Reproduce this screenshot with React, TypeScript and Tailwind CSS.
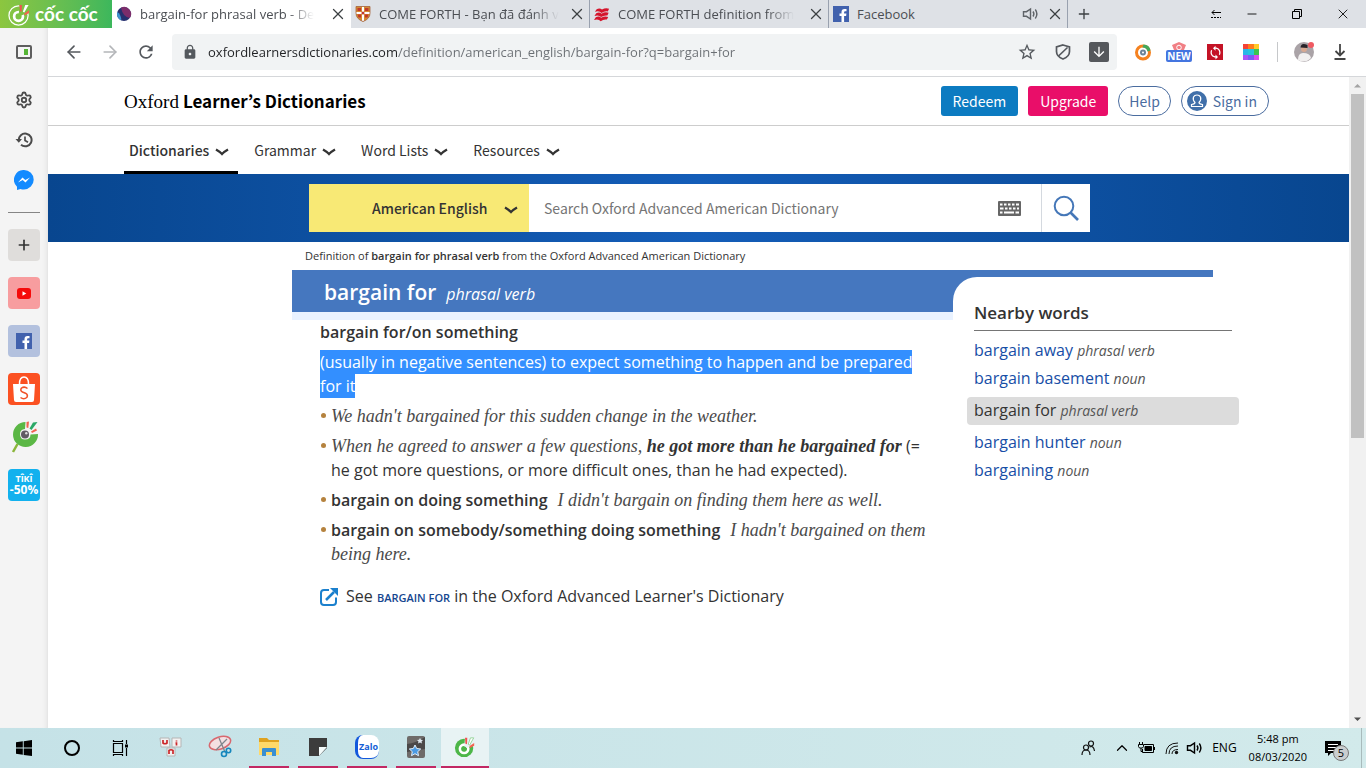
import type { ReactNode } from "react";
import { ArrowLeft, ArrowRight, ChevronUp, Minus, Plus, Settings, X } from "lucide-react";
import { MdArrowDownward, MdLock, MdRefresh, MdStarOutline, MdSync } from "react-icons/md";

const ui = "font-['Open_Sans','Noto_Sans',sans-serif]";
const source = "font-['Noto_Sans_CJK_JP','Open_Sans',sans-serif]";

function CocCocMark({ mono = false, className }: { mono?: boolean; className: string }) {
  return (
    <svg viewBox="0 0 24 24" className={className} aria-hidden="true">
      {mono ? (
        <circle cx="11" cy="13" r="10" fill="none" stroke="#fff" strokeWidth="1.3" />
      ) : (
        <circle cx="11" cy="13" r="10" fill="#4db648" />
      )}
      <circle cx="11" cy="14" r="4.6" fill="none" stroke="#fff" strokeWidth="2.8" />
      <path d="M11 14 12 2 22 1 22 10Z" fill={mono ? "#7cc243" : "#e8f3f4"} />
      <circle cx="11" cy="14" r="2.6" fill={mono ? "#7cc243" : "#4db648"} />
      <path d="M12.500 8.500 12 2 14.500 2 14.200 9Z" fill="#ef5350" />
      <path d="M15.500 9 18 2 21.500 2 17 10Z" fill="#fff" stroke={mono ? "none" : "#7cc97f"} strokeWidth=".8" />
      <path d="M17 11 22 7.500 22 10.500 17.300 13Z" fill="#f4624f" />
    </svg>
  );
}

function Speaker({ className }: { className: string }) {
  return (
    <svg viewBox="0 0 18 16" className={className} fill="none" stroke="currentColor" strokeWidth="1.4" aria-hidden="true">
      <path d="M1.500 5.700h3L8.500 3v10l-4-2.700h-3z" />
      <path d="M11 5.500q1.800 2.500 0 5M13.300 3.500q3.200 4.500 0 9" />
    </svg>
  );
}

function Globe() {
  return (
    <svg viewBox="0 0 16 16" className="size-4" aria-hidden="true">
      <circle cx="8" cy="8" r="7" fill="#27306f" />
      <path d="M5 1.700A7 7 0 0 1 13.800 12Q7 11 5 1.700Z" fill="#7c2d6b" />
      <path d="M1.300 6a7 7 0 0 0 4 8.500Q5 8 1.300 6Z" fill="#3f93cf" />
    </svg>
  );
}

function Shield() {
  return (
    <svg viewBox="0 0 16 16" className="size-4" aria-hidden="true">
      <path d="M1 .500h14v6.500q0 6-7 8.500Q1 13 1 7Z" fill="#d58b32" />
      <path d="M2.500 2h3.500v3H2.500zM10 2h3.500v3H10zM2.500 8.500H6v3H3.500zM10 8.500h3.500l-1 3H10z" fill="#c0392b" />
      <path d="M7 .500h2v5.500h6v2H9v7H7V8H1V6h6Z" fill="#fff" />
      <circle cx="8" cy="7" r="1.600" fill="#c0392b" />
      <path d="M1 .500h14v6.500q0 6-7 8.500Q1 13 1 7Z" fill="none" stroke="#a5623b" strokeWidth=".8" />
    </svg>
  );
}

function Waves() {
  const wave = "M1 4.500 3 1.500Q6.500-.500 9 2 13-.500 17 1L15.500 4Q11.500 3.500 8.500 5.800 6 2.800 1 4.500Z";
  return (
    <svg viewBox="0 0 18 15" className="h-[15px] w-[18px]" fill="#d5152c" aria-hidden="true">
      <path d={wave} />
      <path d={wave} transform="translate(-.5 4.600)" />
      <path d={wave} transform="translate(-1 9.200)" />
    </svg>
  );
}

function FacebookTile() {
  return (
    <svg viewBox="0 0 16 16" className="size-4" aria-hidden="true">
      <path d="M0 0h16v16H0z" fill="#4161ad" />
      <path d="M8.500 16V10H6.500V7.600h2V6q0-3 3-3h2v2.300h-1.400q-1 0-1 1v1.300h2.300L13.100 10h-2v6z" fill="#fff" />
    </svg>
  );
}

function Tab({ icon, title, active = false, sound = false, faded = true }: { icon: ReactNode; title: string; active?: boolean; sound?: boolean; faded?: boolean }) {
  return (
    <div className={`flex min-w-0 max-w-[239px] flex-1 items-center border-r pl-1 ${active ? "border-white bg-white" : "border-gray-400"}`}>
      <button type="button" className="flex min-w-0 flex-1 items-center gap-2 text-left text-[13px] leading-5 text-[#4b4e53]">
        <span className="flex w-4 shrink-0 justify-center">{icon}</span>
        <span className={`min-w-0 whitespace-nowrap ${faded ? "mask-r-from-85% mask-r-to-100%" : ""}`}>{title}</span>
      </button>
      {sound && <Speaker className="mr-[7px] h-4 w-[18px] shrink-0 text-[#5f6368]" />}
      <button type="button" aria-label="Close tab" className="mr-1 flex size-4 shrink-0 items-center justify-center text-[#3c4043]">
        <X className="size-[18px] shrink-0" strokeWidth={1.7} />
      </button>
    </div>
  );
}

function TabStrip() {
  return (
    <div className="flex h-7 shrink-0 bg-[#dee1e6]">
      <div className="flex w-28 shrink-0 items-center gap-1 bg-linear-to-r from-[#8cc63f] to-[#3cb75c] pl-2">
        <CocCocMark mono className="size-[23px]" />
        <span className="font-['Lato','Noto_Sans',sans-serif] text-[19px] leading-6 font-bold text-white">cốc cốc</span>
      </div>
      <Tab active icon={<Globe />} title="bargain-for phrasal verb - De" />
      <Tab icon={<Shield />} title="COME FORTH - Bạn đã đánh v" />
      <Tab icon={<Waves />} title="COME FORTH definition from" />
      <Tab sound faded={false} icon={<FacebookTile />} title="Facebook" />
      <button type="button" aria-label="New tab" className="flex w-8 shrink-0 items-center justify-center text-[#3c4043]">
        <Plus className="size-4" strokeWidth={2} />
      </button>
      <div className="ml-auto flex shrink-0 items-center gap-6 pr-[15px] text-black">
        <button type="button" aria-label="Scroll tabs">
          <svg viewBox="0 0 10 10" className="size-2.5" fill="none" stroke="currentColor" aria-hidden="true">
            <path d="M1 3.500h9M3.500 1l-2.500 2.500 2.500 2.500" />
            <path d="M0 8.500h10" strokeDasharray="2 1" />
          </svg>
        </button>
        <button type="button" aria-label="Minimize"><Minus className="size-3.5" strokeWidth={1.5} /></button>
        <button type="button" aria-label="Restore" className="ml-2">
          <svg viewBox="0 0 12 12" className="size-3" fill="none" stroke="currentColor" aria-hidden="true">
            <path d="M1.500 3.500h7v7h-7zM3.500 3.500v-2h7v7h-2" />
          </svg>
        </button>
        <button type="button" aria-label="Close window" className="ml-2"><X className="size-4" strokeWidth={1.3} /></button>
      </div>
    </div>
  );
}

const squares = ["#f44336", "#ff7a1c", "#ffc928", "#29b6e8", "#26c6da", "#3cc44f", "#a955f7", "#7a5cf5", "#d94ff0"];

function Toolbar() {
  return (
    <div className="flex h-[49px] shrink-0 items-center border-b border-[#d5d7da] bg-white pr-4 pl-4 text-[#55595e]">
      <div className="flex items-center gap-4">
        <button type="button" aria-label="Back"><ArrowLeft className="size-5" strokeWidth={2} /></button>
        <button type="button" aria-label="Forward" className="text-[#b4b6b9]"><ArrowRight className="size-5" strokeWidth={2} /></button>
        <button type="button" aria-label="Reload"><MdRefresh className="size-5" /></button>
      </div>
      <div className="ml-4 flex h-9 min-w-0 flex-1 items-center rounded bg-[#f1f3f4] pr-2 pl-2.5">
        <MdLock className="size-4 shrink-0" />
        <input
          aria-label="Address"
          defaultValue="oxfordlearnersdictionaries.com/definition/american_english/bargain-for?q=bargain+for"
          className="ml-2.5 min-w-0 flex-1 bg-[linear-gradient(to_right,#202124_189px,#6b6f74_189px)] bg-clip-text text-[13px] leading-6 text-transparent outline-none"
        />
        <div className="flex shrink-0 items-center gap-4">
          <button type="button" aria-label="Bookmark"><MdStarOutline className="size-5" /></button>
          <button type="button" aria-label="Ad block">
            <svg viewBox="0 0 16 16" className="size-5 p-0.5" fill="none" stroke="currentColor" strokeWidth="1.700" aria-hidden="true">
              <path d="M8 1 14.500 3v4.500q0 5-6.500 7.500Q1.500 12.500 1.500 7.500V3Z" />
              <path d="M3.500 12 12.500 3.500" />
            </svg>
          </button>
          <button type="button" aria-label="Save media" className="flex size-5 items-center justify-center rounded-xs bg-[#55585c] text-white"><MdArrowDownward className="size-4" /></button>
        </div>
      </div>
      <div className="ml-[17px] flex shrink-0 items-center gap-[11px]">
        <button type="button" aria-label="Music extension">
          <svg viewBox="0 0 18 18" className="size-[18px]" aria-hidden="true">
            <circle cx="9" cy="9.500" r="6.500" fill="none" stroke="#f58220" strokeWidth="3" />
            <path d="M9.500 1.500q6 0 7 6l-3 1q-1-4-5-4Z" fill="#43a85b" />
            <circle cx="9" cy="9.500" r="3" fill="#6b8499" />
            <circle cx="9" cy="9.500" r="1" fill="#fff" />
          </svg>
        </button>
        <button type="button" aria-label="New deals" className="ml-[3px] flex h-[22px] w-[26px] flex-col items-center pt-px">
          <svg viewBox="0 0 16 8" className="h-2 w-4 shrink-0" aria-hidden="true">
            <path d="M1 3 8 0l7 3-2 5H3Z" fill="#f17f84" />
            <circle cx="8" cy="5.500" r="2.300" fill="none" stroke="#fff" />
          </svg>
          <span className="flex h-3 w-[26px] shrink-0 items-center justify-center rounded-xs bg-[#4475e0] text-[10px] leading-3 font-bold text-white">NEW</span>
        </button>
        <button type="button" aria-label="Sync" className="ml-1 flex size-4 items-center justify-center bg-[#c41326] text-white"><MdSync className="size-[15px]" /></button>
        <button type="button" aria-label="Colours" className="ml-[9px]">
          <svg viewBox="0 0 3 3" className="size-4" shapeRendering="crispEdges" aria-hidden="true">
            {squares.map((c, i) => <rect key={c} x={i % 3} y={Math.floor(i / 3)} width="1" height="1" fill={c} />)}
          </svg>
        </button>
        <span className="ml-[7px] h-5 w-px bg-[#c6c8ca]" />
        <button type="button" aria-label="Profile" className="ml-[5px]">
          <svg viewBox="0 0 20 20" className="size-5" aria-hidden="true">
            <circle cx="10" cy="10" r="10" fill="#aaa3a7" />
            <path d="M4 18q0-7 5-7 7 0 8 5-6 6-13 2Z" fill="#f1efef" />
            <circle cx="10" cy="7" r="3" fill="#d7a891" />
            <path d="M6.500 5.500Q7 0 13.500 3v3Z" fill="#272329" />
            <circle cx="17" cy="3" r="3" fill="#f05a62" />
          </svg>
        </button>
        <button type="button" aria-label="Downloads" className="ml-[5px] text-[#444]">
          <svg viewBox="0 0 20 20" className="size-5" fill="none" stroke="currentColor" strokeWidth="1.800" aria-hidden="true">
            <path d="M10 2v11M5.500 9 10 13.500 14.500 9M4.500 17h11" />
          </svg>
        </button>
      </div>
    </div>
  );
}

function BrowserSidebar() {
  return (
    <aside className="flex w-12 shrink-0 flex-col items-center bg-[#f4f4f4] pt-4 text-[#4b4b4b] shadow-[inset_-5px_0_5px_-4px_#dddddd]">
      <button type="button" aria-label="Toggle sidebar" className="flex h-4 items-center">
        <svg viewBox="0 0 16 14" className="h-3.5 w-4" aria-hidden="true">
          <rect x="1" y="1" width="14" height="12" rx="1" fill="none" stroke="#5e5e5e" strokeWidth="2" />
          <path d="M8 4h4v6H8z" fill="#55b435" />
        </svg>
      </button>
      <button type="button" aria-label="Settings" className="mt-[31px]"><Settings className="size-[18px]" strokeWidth={2.4} /></button>
      <button type="button" aria-label="History" className="mt-[22px]">
        <svg viewBox="0 0 18 18" className="size-[18px]" fill="none" stroke="currentColor" strokeWidth="2" aria-hidden="true">
          <path d="M3.800 9.500A6.400 6.400 0 1 1 6 13.800" />
          <path d="M10 5.500V9.500l3 1.800" strokeWidth="1.700" />
          <path d="M.500 8h6.500L3.800 11.800Z" fill="currentColor" stroke="none" />
        </svg>
      </button>
      <button type="button" aria-label="Messenger" className="mt-[21px]">
        <svg viewBox="0 0 20 20" className="size-5" aria-hidden="true">
          <path d="M10 0a9.700 9.700 0 0 1 0 19.400q-2 0-3.500-.500L3 20v-3.300A9.700 9.700 0 0 1 10 0Z" fill="#148bff" />
          <path d="m4 12.500 4.500-5 2.800 2.400L16 7.500l-4.500 5-2.800-2.400Z" fill="#fff" />
        </svg>
      </button>
      <span className="mt-[22px] h-px w-8 bg-[#858585]" />
      <div className="mt-4 flex flex-col gap-4">
        <button type="button" aria-label="Add shortcut" className="flex size-8 items-center justify-center rounded bg-[#dfdddb] text-[#333]"><Plus className="size-4" strokeWidth={2.5} /></button>
        <button type="button" aria-label="YouTube" className="flex size-8 items-center justify-center rounded bg-[#f79d9f]">
          <svg viewBox="0 0 14 11" className="h-[11px] w-3.5" aria-hidden="true"><rect width="14" height="11" rx="3" fill="#f50a0a" /><path d="M5.500 3.300v4.400L9.300 5.500Z" fill="#fff" /></svg>
        </button>
        <button type="button" aria-label="Facebook" className="flex size-8 items-center justify-center rounded bg-[#b3c1de]"><FacebookTile /></button>
        <button type="button" aria-label="Shopee" className="flex size-8 items-center justify-center rounded bg-[#fb5122]">
          <svg viewBox="0 0 24 28" className="h-7 w-6" aria-hidden="true">
            <path d="M1 9h22l-1 16q0 2-2 2H4q-2 0-2-2Z" fill="#fff" />
            <path d="M7.500 9q0-7 4.500-7t4.500 7" fill="none" stroke="#fff" strokeWidth="1.500" />
            <path d="M15.500 13.500q-3-2.500-6-.500-1.800 2.500 1 4l3 1.200q2.800 1.500 1.500 4-3 3-6.500.300" fill="none" stroke="#f05228" strokeWidth="1.500" />
          </svg>
        </button>
        <button type="button" aria-label="Cốc Cốc search" className="size-8">
          <svg viewBox="0 0 32 32" className="size-8" aria-hidden="true">
            <path d="M9.500 23 5 31" stroke="#8bb53b" strokeWidth="2.500" />
            <path d="M17.500 1a12.500 12.500 0 1 0 12.500 12l-7.500.500q0 5-5.500 5-5 0-5-5.500 0-4.500 5-5Z" fill="#5bb745" />
            <circle cx="17" cy="13.500" r="4" fill="#615b64" />
            <circle cx="18.300" cy="12.300" r="1.200" fill="#ddd" />
            <path d="M18.500 6.500 18.500 1l2.500-.500-.700 6.500Z" fill="#f0624e" />
            <path d="m21.500 7.500 3.500-6 4.500-.500-6 8Z" fill="#2aa866" />
            <path d="m23 10.500 5-3 1 2-5 2.500Z" fill="#f0624e" />
          </svg>
        </button>
        <button type="button" aria-label="Tiki sale" className="flex size-8 flex-col items-center justify-center rounded bg-[#12b1ee] text-white">
          <span className="text-[9px] leading-[10px] font-bold">TÎKÎ</span>
          <span className="text-[12px] leading-3 font-bold">-50%</span>
        </button>
      </div>
    </aside>
  );
}

function Chevron() {
  return (
    <svg viewBox="0 0 14 8" className="h-2 w-3.5 shrink-0" fill="none" stroke="#333" strokeWidth="2.300" aria-hidden="true">
      <path d="M1 1.500Q4.500 3.500 7 6 9.500 3.500 13 1.500" />
    </svg>
  );
}

function SiteHeader() {
  return (
    <header className={source}>
      <div className="border-b border-[#cdcdcd]">
        <div className="mx-auto flex h-12 max-w-[1149px] items-center gap-2.5 pr-1">
          <a href="#home" className="mr-auto flex items-baseline gap-1 text-[17px] leading-6 text-black">
            <span className="font-['Liberation_Serif',serif] text-[19px]">Oxford</span>
            <span className="font-bold">Learner’s Dictionaries</span>
          </a>
          <a href="#redeem" className="flex h-[30px] items-center rounded-[3px] bg-[#0c7bc1] px-3 text-[14px] text-white">Redeem</a>
          <a href="#upgrade" className="flex h-[30px] items-center rounded-[3px] bg-[#e90e69] px-3 text-[14px] text-white">Upgrade</a>
          <a href="#help" className="flex h-[30px] items-center rounded-full border border-[#4a6c9f] px-2.5 text-[14px] text-[#4a6c9f]">Help</a>
          <a href="#signin" className="flex h-[30px] items-center gap-1.5 rounded-full border border-[#4a6c9f] pr-[11px] pl-[5px] text-[14px] text-[#4a6c9f]">
            <svg viewBox="0 0 20 20" className="size-5" aria-hidden="true">
              <circle cx="10" cy="10" r="10" fill="#406fa9" />
              <path d="M8 11.500Q5.500 9 6.500 6 7.500 4 10 4t3.500 2q1 3-1.500 5.500 0 1.500 3.500 2v2h-11v-2q3.500-.500 3.500-2Z" fill="none" stroke="#fff" strokeWidth="1.200" />
            </svg>
            Sign in
          </a>
        </div>
      </div>
      <nav aria-label="Site" className="mx-auto flex h-12 max-w-[1149px] gap-3 text-[14px] text-[#333]">
        {["Dictionaries", "Grammar", "Word Lists", "Resources"].map((label, i) => (
          <a key={label} href={`#nav-${i}`} className={`flex items-center gap-1.5 border-b-3 pt-1 ${i === 0 ? "border-black pr-[9px] pl-[5px] font-medium" : "border-transparent px-1"} ${i > 1 ? "ml-[5px]" : ""}`}>
            {label}
            <span className="pt-0.5"><Chevron /></span>
          </a>
        ))}
      </nav>
    </header>
  );
}

function SearchBand() {
  return (
    <div className="bg-[linear-gradient(to_right,#08468f,#145db8_50%,#08468f)] py-2.5 pl-0.5">
      <form className={`mx-auto flex h-12 max-w-[781px] bg-white ${source}`}>
        <div className="relative w-[220px] shrink-0 bg-[#f8e975]">
          <select aria-label="Dictionary" className="size-full appearance-none bg-transparent pl-[63px] text-[14px] font-medium text-[#333] outline-none">
            <option>American English</option>
          </select>
          <span className="pointer-events-none absolute inset-y-0 right-[11px] flex items-center pt-1"><Chevron /></span>
        </div>
        <input aria-label="Search" placeholder="Search Oxford Advanced American Dictionary" className="min-w-0 flex-1 px-[15px] text-[14px] outline-none placeholder:text-[#757575]" />
        <button type="button" aria-label="Keyboard" className="mr-5">
          <svg viewBox="0 0 23 15" className="h-[15px] w-[23px]" aria-hidden="true">
            <rect width="23" height="15" rx="1" fill="#666" />
            <path d="M2 3.500h2.500M6 3.500h2.500M10 3.500h2.500M14 3.500h2.500M18 3.500h3M2 7.500h3.500M7 7.500h2.500M11 7.500h2.500M15 7.500h2.500M19 7.500h2M2 11.500h2.500M6 11.500h10M17.500 11.500H21" stroke="#fff" strokeWidth="2.200" />
          </svg>
        </button>
        <button type="submit" aria-label="Go" className="flex w-[49px] items-center justify-center border-l border-[#d4d9df] text-[#4577b8]">
          <svg viewBox="0 0 26 26" className="size-[26px]" fill="none" stroke="currentColor" aria-hidden="true">
            <circle cx="11" cy="11" r="9.300" strokeWidth="2" />
            <path d="m17.500 17.500 7.500 7.500" strokeWidth="2.600" />
          </svg>
        </button>
      </form>
    </div>
  );
}

const nearby = [
  ["bargain away", "phrasal verb"],
  ["bargain basement", "noun"],
  ["bargain for", "phrasal verb"],
  ["bargain hunter", "noun"],
  ["bargaining", "noun"],
];

function Example({ children }: { children: ReactNode }) {
  return (
    <li className="flex gap-[5px]">
      <span className="mt-[9px] ml-px size-[5px] shrink-0 rounded-full bg-[#b5823e]" />
      <p className="min-w-0">{children}</p>
    </li>
  );
}

const serif = "font-['Liberation_Serif',serif] text-[18px] italic";

function Entry() {
  return (
    <main className="mx-auto max-w-[1149px] pl-[168px] text-[16px] leading-6 text-[#333]">
      <p className="py-1 pl-[13px] text-[11px] leading-5">
        Definition of <b className="font-semibold">bargain for phrasal verb</b> from the Oxford Advanced American Dictionary
      </p>
      <div className="h-[7px] max-w-[921px] bg-[#4577bf]" />
      <div className="flex max-w-[947px] items-start">
        <article className="min-w-0 flex-1">
          <div className="flex h-[43px] items-baseline gap-2.5 border-b-8 border-[#e9f2ff] bg-[#4577bf] pl-8 text-white">
            <h1 className="text-[21px] leading-[30px] font-semibold">bargain for</h1>
            <span className="text-[16px] italic">phrasal verb</span>
          </div>
          <div className="pr-5 pl-7">
            <h2 className="font-semibold">bargain for/on something</h2>
            <p className="mt-1.5"><span className="bg-[#338fff] py-px text-white">(usually in negative sentences) to expect something to happen and be prepared for it</span></p>
            <ul className="mt-1.5 flex flex-col gap-1.5">
              <Example><i className={`${serif} text-[#4a4a4a]`}>We hadn't bargained for this sudden change in the weather.</i></Example>
              <Example>
                <i className={`${serif} text-[#4a4a4a]`}>When he agreed to answer a few questions, <b className="text-[#333]">he got more than he bargained for</b></i> (= he got more questions, or more difficult ones, than he had expected).
              </Example>
              <Example><b className="mr-2.5 font-semibold">bargain on doing something</b><i className={`${serif} text-[#4a4a4a]`}>I didn't bargain on finding them here as well.</i></Example>
              <Example><b className="mr-2.5 font-semibold">bargain on somebody/something doing something</b><i className={`${serif} text-[#4a4a4a]`}>I hadn't bargained on them being here.</i></Example>
            </ul>
            <p className="mt-[18px] flex items-center gap-2">
              <svg viewBox="0 0 18 18" className="size-[18px] shrink-0" fill="none" stroke="#1b80cd" strokeWidth="2" aria-hidden="true">
                <path d="M9 2H4Q1 2 1 5v9q0 3 3 3h9q3 0 3-3V9.500" />
                <path d="M6 12 14 4" strokeWidth="2.500" />
                <path d="M10 0h8v8Z" fill="#1b80cd" stroke="none" />
              </svg>
              <span>See <a href="#bargain-for" className="text-[11px] font-semibold text-[#14468f] uppercase">bargain for</a> in the Oxford Advanced Learner's Dictionary</span>
            </p>
          </div>
        </article>
        <div className="w-[286px] shrink-0 bg-[linear-gradient(#4577bf,#4577bf)] bg-[length:24px_24px] bg-no-repeat">
          <section className="rounded-tl-[24px] bg-white pt-6 pl-3.5">
            <h2 className="mx-[7px] border-b border-[#757575] pb-[5px] text-[17px] font-semibold">Nearby words</h2>
            <ul className="mt-1.5 flex flex-col">
              {nearby.map(([word, kind], i) => (
                <li key={word} className={`h-7 px-[7px] py-px ${i === 2 ? "my-1 rounded bg-[#dcdcdc]" : ""}`}>
                  <a href={`#word-${i}`} className={i === 2 ? "" : "text-[#174ea6]"}>{word} <i className="text-[14px] text-[#555]">{kind}</i></a>
                </li>
              ))}
            </ul>
          </section>
        </div>
      </div>
    </main>
  );
}

function ScrollRail() {
  return (
    <div className="flex w-[17px] shrink-0 flex-col items-center justify-between bg-[#f1f1f1]" aria-hidden="true">
      <div className="flex flex-col items-center">
        <svg viewBox="0 0 17 17" className="size-[17px]"><path d="M5 10.500h7L8.500 7Z" fill="#a3a3a3" /></svg>
        <span className="h-[344px] w-[13px] bg-[#c1c1c1]" />
      </div>
      <svg viewBox="0 0 17 17" className="size-[17px]"><path d="M5 6.500h7L8.500 10Z" fill="#505050" /></svg>
    </div>
  );
}

const taskIcons: { name: string; running?: boolean; active?: boolean; art: ReactNode }[] = [
  {
    name: "Word puzzle",
    art: (
      <svg viewBox="0 0 24 24" className="size-6">
        <path d="M1 3h9l1 9H2ZM13 3h9v9h-9ZM8 13h8v8H8Z" fill="#f2f1f1" stroke="#b5b5b5" />
        <path d="M4 5v3q2 1.500 4 0V5M17.500 5.500v1M16.500 8h1v2.500M10 19v-3.500q2-1.500 4 0v3.500" fill="none" stroke="#cc2629" strokeWidth="1.700" />
      </svg>
    ),
  },
  {
    name: "Snipping tool",
    art: (
      <svg viewBox="0 0 24 24" className="size-6" fill="none">
        <ellipse cx="12" cy="8" rx="11" ry="6" transform="rotate(-18 12 8)" fill="#f4dfe2" stroke="#d8686f" strokeWidth="1.500" />
        <path d="m11 3 6 14M19 4 8 15" stroke="#7e858c" strokeWidth="1.300" />
        <circle cx="16" cy="19" r="2.500" stroke="#1687bd" strokeWidth="1.600" />
        <circle cx="20.500" cy="15.500" r="2.200" stroke="#1687bd" strokeWidth="1.600" />
      </svg>
    ),
  },
  {
    name: "File Explorer",
    running: true,
    art: (
      <svg viewBox="0 0 24 24" className="size-6">
        <path d="M2 3h8l2 2h10v15H2Z" fill="#dfa21f" />
        <path d="M2 7h20v13H2Z" fill="#ffd969" />
        <path d="M5 21v-7q0-1 1-1h12q1 0 1 1v7h-4v-4H9v4Z" fill="#3a8fd1" />
      </svg>
    ),
  },
  {
    name: "Sticky Notes",
    running: true,
    art: (
      <svg viewBox="0 0 20 20" className="size-5"><path d="M1 1h18v10l-8 8H1Z" fill="#3c3c3c" /><path d="m11 19 8-9h-8Z" fill="#f4fbfb" /></svg>
    ),
  },
  {
    name: "Zalo",
    running: true,
    art: (
      <span className="flex size-6 items-center justify-center rounded-lg border-b border-l-3 border-[#1358dc] bg-white text-[9px] font-bold text-[#1460d6]">Zalo</span>
    ),
  },
  {
    name: "Anki",
    running: true,
    art: (
      <svg viewBox="0 0 20 24" className="h-6 w-5">
        <rect x="1" y="1" width="18" height="22" rx="2" fill="#6e6b69" />
        <path d="M1 9Q10 8 19 2v12L1 17Z" fill="#4a4848" />
        <path d="m9 10 1.700 3.500 4 .500-3 2.700.800 4-3.500-2-3.500 2 .800-4-3-2.700 4-.500Z" fill="#4b9be3" stroke="#e2f0fb" />
        <path d="m14 3 1 1.800 2 .200-1.500 1.500.500 2-2-1-2 1 .500-2L11 5l2-.200Z" fill="#dfe8ef" />
      </svg>
    ),
  },
  { name: "Cốc Cốc", running: true, active: true, art: <CocCocMark className="size-[22px]" /> },
];

function Taskbar() {
  return (
    <footer className="flex h-10 shrink-0 bg-linear-to-r from-[#c5e2e7] to-[#d2eaeb] text-black">
      <button type="button" aria-label="Start" className="flex w-12 items-center justify-center">
        <svg viewBox="0 0 16 16" className="size-4"><path d="M0 2.300 6.800 1.300v6.300H0ZM7.700 1.200 16 0v7.600H7.700ZM0 8.500h6.800v6.300L0 13.800ZM7.700 8.500H16V16l-8.300-1.100Z" /></svg>
      </button>
      <button type="button" aria-label="Cortana" className="flex w-12 items-center justify-center"><span className="size-4 rounded-full border-2 border-black" /></button>
      <button type="button" aria-label="Task view" className="flex w-12 items-center justify-center">
        <svg viewBox="0 0 17 16" className="h-4 w-[17px]" fill="none" stroke="#000" strokeWidth="1.200"><path d="M1.500 3.500h9v9h-9zM1.500 0v1.500h9V0M1.500 16v-1.500h9V16M14.500 0v4M14.500 8v8" /><path d="M13 4.500h3v3h-3z" fill="#000" stroke="none" /></svg>
      </button>
      <div className="ml-[3px] flex gap-px">
        {taskIcons.map((t) => (
          <button key={t.name} type="button" aria-label={t.name} className={`flex w-12 flex-col items-center ${t.active ? "bg-[#e8f3f4]" : ""}`}>
            <span className="flex h-[38px] items-center">{t.art}</span>
            {t.running && <span className={`h-0.5 bg-[#c22863] ${t.active ? "w-12" : "w-10"}`} />}
          </button>
        ))}
      </div>
      <div className="ml-auto flex items-center text-[12px] leading-4">
        <button type="button" aria-label="People">
          <svg viewBox="0 0 14 16" className="h-4 w-3.5" fill="none" stroke="#111" strokeWidth="1.200"><circle cx="5" cy="7.500" r="2.500" /><path d="M1 15q0-5 4-5t4 5" /><circle cx="10" cy="3.500" r="2.500" /><path d="M8.500 7q4-2 5 4" /></svg>
        </button>
        <button type="button" aria-label="Hidden icons" className="ml-[18px]"><ChevronUp className="size-[18px]" strokeWidth={1.6} /></button>
        <svg viewBox="0 0 17 12" className="ml-[7px] h-3 w-[17px]" fill="none" stroke="#000" aria-hidden="true"><path d="M6 2.500h9.500v8H4.500V7M.500 2.500h5v2l-1 1.500h-3l-1-1.500zM1.500 0v2M4.500 0v2M3 6v3.500h1.500M16.500 5v3" /><path d="M7 4.500h6.500v4H7z" fill="#000" /></svg>
        <svg viewBox="0 0 14 14" className="ml-2.5 size-3.5" fill="none" stroke="#111" aria-hidden="true"><path d="M1 13Q1 2 13 2M4 13Q4 5 13 5M7 13Q7 8.500 13 8.500" /><circle cx="11.500" cy="11.500" r="1.700" fill="#111" stroke="none" /></svg>
        <Speaker className="ml-[7px] h-4 w-[18px]" />
        <span className="ml-2">ENG</span>
        <time className="ml-3 text-center text-[11px] leading-[18px]">5:48 pm<br />08/03/2020</time>
        <button type="button" aria-label="5 notifications" className="relative ml-[18px] h-5 w-6">
          <svg viewBox="0 0 16 15" className="h-[15px] w-4"><path d="M0 0h16v12H6l-3 3v-3H0Z" /><path d="M3 3.500h10M3 6.500h10M3 9.500h7" stroke="#fff" /></svg>
          <span className="absolute top-[7px] left-2 flex size-4 items-center justify-center rounded-full border border-[#777] bg-[#cacecf] text-[11px]">5</span>
        </button>
        <span className="ml-3 h-10 w-px bg-[#a8bbbc]" />
        <span className="w-1" />
      </div>
    </footer>
  );
}

export default function App() {
  return (
    <div className={`flex min-h-screen flex-col bg-white ${ui}`}>
      <TabStrip />
      <div className="flex min-h-0 flex-1">
        <BrowserSidebar />
        <div className="flex min-w-0 flex-1 flex-col">
          <Toolbar />
          <div className="flex min-h-0 flex-1">
            <div className="min-w-0 flex-1">
              <SiteHeader />
              <SearchBand />
              <Entry />
            </div>
            <ScrollRail />
          </div>
        </div>
      </div>
      <Taskbar />
    </div>
  );
}
